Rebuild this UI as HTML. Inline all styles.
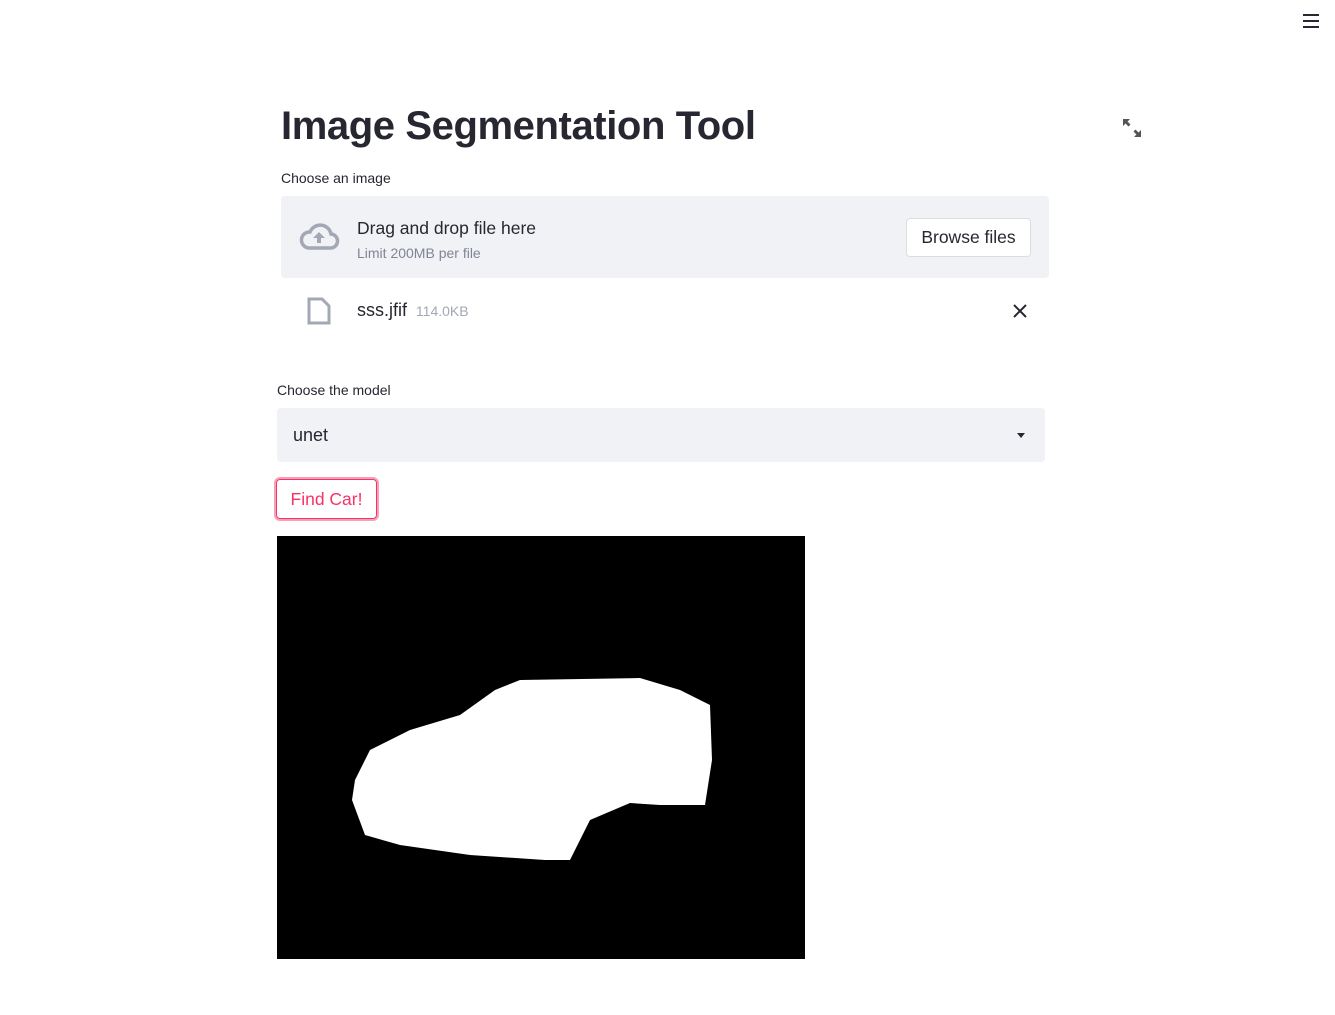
<!DOCTYPE html>
<html><head><meta charset="utf-8"><style>
body{margin:0;width:1335px;height:1015px;background:#fff;font-family:"Liberation Sans",sans-serif;color:#262730;position:relative;overflow:hidden}
.a{position:absolute}
</style></head><body>
<div class="a" style="left:1303px;top:14px;width:16px;height:2px;background:#262730;box-shadow:0 6px 0 #262730,0 12px 0 #262730"></div>
<div class="a" style="left:281px;top:104px;font-size:40px;font-weight:bold;letter-spacing:-0.4px">Image Segmentation Tool</div>
<svg class="a" style="left:1123px;top:119px" width="18" height="18" viewBox="0 0 18 18" fill="#555"><path d="M0 0h7l-2.5 2.5 3 3-2 2-3-3L0 7zM18 18h-7l2.5-2.5-3-3 2-2 3 3L18 11z"/></svg>
<div class="a" style="left:281px;top:170px;font-size:14px">Choose an image</div>
<div class="a" style="left:281px;top:196px;width:768px;height:82px;background:#f0f2f6;border-radius:4px"></div>
<svg class="a" style="left:298px;top:221px" width="42" height="32" viewBox="0 0 42 32"><path d="M11 27h21a7 7 0 0 0 1-14 11 11 0 0 0-21-2 8 8 0 0 0-1 16z" fill="none" stroke="#a3a8b4" stroke-width="3.5"/><path d="M21 11l-6 6h4v5h4v-5h4z" fill="#a3a8b4"/></svg>
<div class="a" style="left:357px;top:218px;font-size:17.5px">Drag and drop file here</div>
<div class="a" style="left:357px;top:245px;font-size:14px;color:#808495">Limit 200MB per file</div>
<div class="a" style="left:906px;top:218px;width:123px;height:37px;background:#fff;border:1px solid #ddd;border-radius:4px;font-size:17.5px;line-height:37px;text-align:center">Browse files</div>
<svg class="a" style="left:307px;top:297px" width="24" height="28" viewBox="0 0 24 28"><path d="M2 2h13l7 7v17H2z" fill="none" stroke="#a3a8b4" stroke-width="3"/></svg>
<div class="a" style="left:357px;top:300px;font-size:18px">sss.jfif <span style="font-size:14px;color:#a3a8b4">&nbsp;114.0KB</span></div>
<svg class="a" style="left:1013px;top:304px" width="14" height="14"><path d="M1 1l12 12M13 1L1 13" stroke="#262730" stroke-width="2"/></svg>
<div class="a" style="left:277px;top:382px;font-size:14px">Choose the model</div>
<div class="a" style="left:277px;top:408px;width:768px;height:54px;background:#f0f2f6;border-radius:4px"></div>
<div class="a" style="left:293px;top:425px;font-size:18px">unet</div>
<div class="a" style="left:1017px;top:433px;border:4px solid transparent;border-top:5px solid #262730"></div>
<div class="a" style="left:276px;top:479px;width:99px;height:38px;border:1px solid #f63366;box-shadow:0 0 0 2px #f7a1b8;border-radius:4px;font-size:17.5px;color:#f63366;line-height:38px;text-align:center">Find Car!</div>
<svg class="a" style="left:277px;top:536px" width="528" height="423"><rect width="528" height="423" fill="#000"/><path transform="translate(-277,-536)" d="M355 780L370 750 410 730 460 715 495 690 520 680 640 678 680 690 710 705 712 760 705 805 660 805 630 803 590 820 570 860 545 860 470 855 400 845 365 835 352 800Z" fill="#fff"/></svg>
</body></html>
